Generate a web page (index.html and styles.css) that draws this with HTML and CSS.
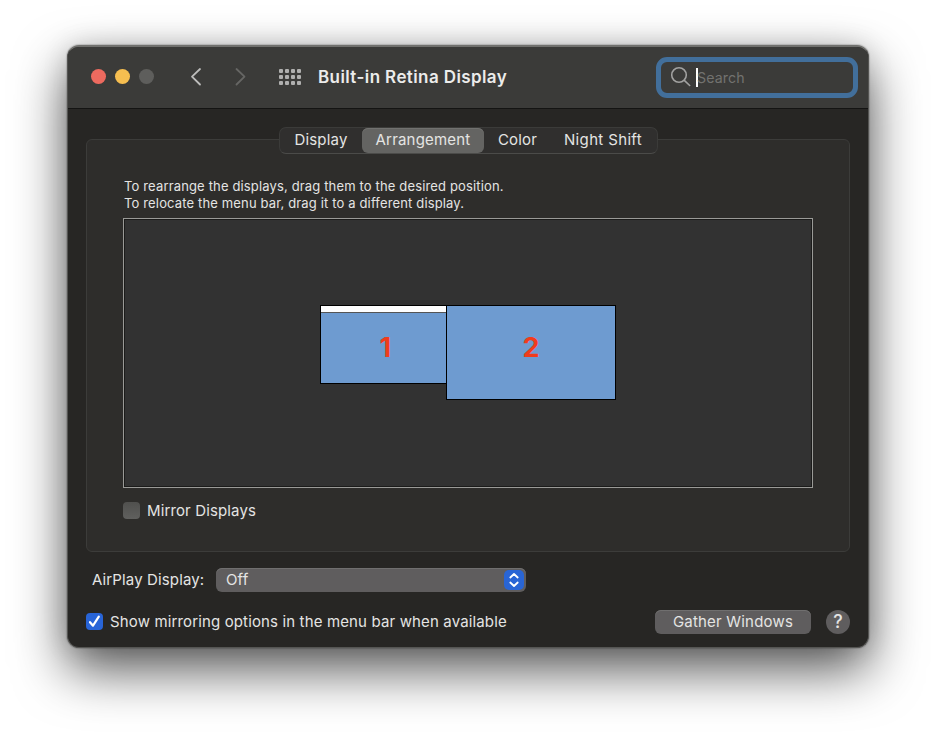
FILE: index.html
```html
<!DOCTYPE html>
<html lang="en">
<head>
<meta charset="utf-8">
<title>Built-in Retina Display</title>
<link rel="stylesheet" href="styles.css">
</head>
<body>
<main class="window">
  <header class="titlebar">
    <div class="lights"><i class="light red"></i><i class="light yellow"></i><i class="light gray"></i></div>
    <svg class="nav back" width="14" height="20" viewBox="0 0 14 20"><path d="M11 2 3 9.600l8 7.900"/></svg>
    <svg class="nav forward" width="14" height="20" viewBox="0 0 14 20"><path d="M3.500 2 11.500 9.600l-8 7.900"/></svg>
    <div class="grid-icon"><i></i><i></i><i></i><i></i><i></i><i></i><i></i><i></i><i></i><i></i><i></i><i></i></div>
    <h1 class="title">Built-in Retina Display</h1>
    <div class="search">
      <svg width="22" height="22" viewBox="0 0 22 22"><circle cx="9" cy="9" r="7.300"/><path d="m14.300 14.300 5.400 5.200"/></svg>
      <span class="caret"></span><span class="placeholder">Search</span>
    </div>
  </header>
  <section class="group">
    <nav class="tabs">
      <span class="tab display">Display</span><span class="tab active">Arrangement</span><span class="tab color">Color</span><span class="tab night">Night Shift</span>
    </nav>
    <p class="hint">To rearrange the displays, drag them to the desired position.<br>To relocate the menu bar, drag it to a different display.</p>
    <div class="arrangement">
      <div class="screen one"><div class="menubar"></div><span>1</span></div>
      <div class="screen two"><span>2</span></div>
    </div>
    <div class="mirror"><i class="box"></i><span>Mirror Displays</span></div>
  </section>
  <div class="airplay">
    <span class="airplay-label">AirPlay Display:</span>
    <div class="select"><span>Off</span>
      <svg width="20" height="20" viewBox="0 0 20 20"><path d="M6.300 7.500 10 4l3.700 3.500M6.300 12.500 10 16l3.700-3.500"/></svg>
    </div>
  </div>
  <footer class="footer">
    <svg class="checked" width="17" height="17" viewBox="0 0 17 17"><path d="m4 9.200 3 3.500 5.800-9"/></svg>
    <span class="show">Show mirroring options in the menu bar when available</span>
    <div class="button">Gather Windows</div>
    <div class="help">?</div>
  </footer>
</main>
</body>
</html>
```
FILE: styles.css
```css
* { box-sizing: border-box; }
body { margin: 0; height: 736px; overflow: hidden; padding: 45px 0 0 67px; background: #fff; font-family: Inter, "Liberation Sans", sans-serif; font-size: 15px; letter-spacing: .13px; color: #e4e4e3; }
span, h1 { white-space: nowrap; }
i, svg { display: block; flex: none; }
.window { width: 802px; height: 603px; border: 1px solid #555553; border-top: 2px solid #71716e; border-radius: 12px; background: #272624; overflow: hidden; box-shadow: 0 0 1px 1px rgba(0,0,0,.15), 0 22px 52px rgba(0,0,0,.66), 0 0 26px rgba(0,0,0,.12); }
.titlebar { height: 62px; display: flex; align-items: center; padding-bottom: 1px; background: #3b3b39; border-bottom: 1px solid #141413; }
.lights { display: flex; gap: 9px; margin: -1px 0 0 23px; }
.light { width: 15px; height: 15px; border-radius: 50%; }
.red { background: #ed6a5f; }
.yellow { background: #f6be50; }
.gray { background: #5e5e5c; }
.nav { fill: none; stroke: #bcbcbb; stroke-width: 1.8; stroke-linecap: round; stroke-linejoin: round; }
.back { margin-left: 35px; }
.forward { margin-left: 30px; stroke: #666664; }
.grid-icon { display: grid; grid-template-columns: repeat(4, 4px); gap: 2px; margin: -1px 0 0 32px; }
.grid-icon i { width: 4px; height: 4px; border-radius: 1px; background: #b0b0af; }
.title { margin: 0 0 0 17px; width: 190px; font-size: 17px; font-weight: 600; letter-spacing: .4px; color: #ececeb; }
.search { width: 202px; height: 41px; margin-left: 148px; border: 5px solid #426f9b; border-radius: 11px; display: flex; align-items: center; padding-left: 9px; }
.search svg { fill: none; stroke: #a1a1a0; stroke-width: 1.6; stroke-linecap: round; }
.caret { width: 2px; height: 19px; margin-left: 4px; background: #fff; }
.placeholder { color: #72726f; margin-left: -1px; font-size: 14.2px; }
.group { width: 764px; height: 413px; margin: 30px 0 0 18px; border: 1px solid #3c3c3a; border-radius: 6px; background: #2e2d2b; }
.tabs { display: flex; width: 379px; height: 27px; margin: -13px 0 0 192px; border: 1px solid #3b3b39; border-bottom-color: #4b4b49; border-radius: 7px; background: #302f2e; }
.tab { display: flex; justify-content: center; align-items: center; height: 25px; padding-bottom: 2px; letter-spacing: .2px; }
.display { width: 82px; }
.active { width: 122px; background: #646462; border-radius: 6px; box-shadow: inset 0 1px #71716f; }
.color { width: 67px; }
.night { width: 104px; letter-spacing: .35px; }
.hint { margin: 24px 0 0 37px; font-size: 13px; line-height: 17px; letter-spacing: .15px; }
.arrangement { width: 690px; height: 270px; margin: 6px 0 0 36px; border: 1px solid #9a9a97; outline: 1px solid #1b1b1a; outline-offset: -2px; background: #323232; display: flex; align-items: flex-start; padding: 86px 0 0 196px; }
.screen { border: 1px solid #000; background: #6e9bd0; color: #f03c1c; font: 700 27px Inter, "Liberation Sans", sans-serif; text-align: center; }
.one { width: 127px; height: 79px; }
.one span { display: block; line-height: 70px; margin-left: 4px; }
.menubar { height: 7px; background: #fff; border-bottom: 1px solid #555; }
.two { width: 170px; height: 95px; margin-left: -1px; line-height: 84px; }
.mirror { display: flex; align-items: center; gap: 7px; margin: 12px 0 0 36px; height: 20px; }
.box { width: 17px; height: 17px; border-radius: 4px; background: linear-gradient(#50504e, #60605e); }
.airplay { display: flex; align-items: center; height: 24px; margin: 16px 0 0 24px; }
.airplay-label { width: 124px; padding-bottom: 1px; }
.select { width: 310px; height: 24px; border-radius: 6px; background: #5f5d5e; box-shadow: inset 0 1px #706f6f; display: flex; align-items: center; justify-content: space-between; padding: 0 2px 0 10px; }
.select span { padding-bottom: 2px; }
.select svg { background: #2965d5; border-radius: 5px; fill: none; stroke: #fff; stroke-width: 1.8; stroke-linecap: round; stroke-linejoin: round; }
.footer { display: flex; align-items: center; height: 24px; margin: 18px 0 0 18px; }
.checked { margin-bottom: 2px; border-radius: 4px; background: #2864d7; fill: none; stroke: #fff; stroke-width: 2.2; stroke-linecap: round; stroke-linejoin: round; }
.show { width: 544px; margin-left: 7px; padding-bottom: 2px; letter-spacing: .14px; }
.button { width: 156px; height: 24px; margin-left: 1px; border-radius: 6px; background: #5f5d5e; box-shadow: inset 0 1px #706f6f; text-align: center; line-height: 23px; letter-spacing: .2px; }
.help { width: 24px; height: 24px; margin-left: 15px; border-radius: 50%; background: #5f5d5e; text-align: center; line-height: 24px; font-size: 18px; font-weight: 500; }
```
